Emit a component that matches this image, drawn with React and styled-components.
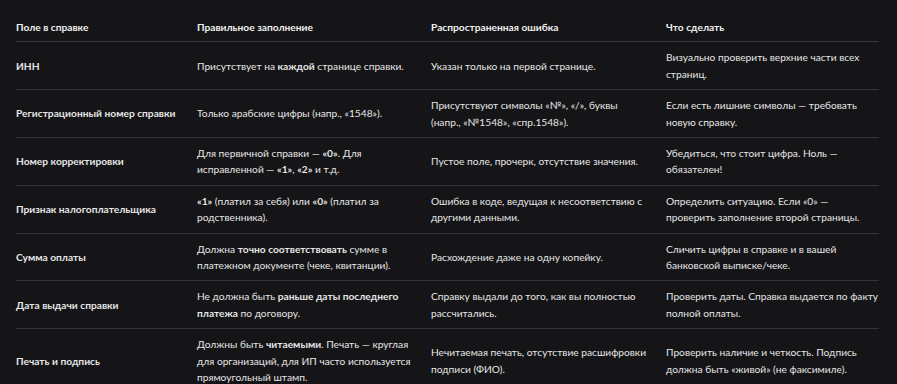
import React from "react";
import styled, { createGlobalStyle } from "styled-components";

const Global = createGlobalStyle`
  html, body { margin: 0; padding: 0; background: #151517; }
  body { font-family: Lato, "Noto Sans", sans-serif; }
`;

const Wrap = styled.div`
  padding: 8px 18px 0 16px;
  background: #151517;
  height: 384px;
  box-sizing: border-box;
  overflow: hidden;
`;

const Table = styled.table`
  width: 100%;
  border-collapse: collapse;
  table-layout: fixed;
  font-size: 10.2px;
  line-height: 16.4px;
  color: #e6e6e6;
`;

const Th = styled.th`
  text-align: left;
  font-weight: 700;
  padding: 11px 6px 6px 0;
  color: #f0f0f0;
  border-bottom: 1px solid #3a3a3c;
  vertical-align: middle;
  &:last-child { padding-right: 0; }
`;

const Td = styled.td`
  padding: 7px 6px 7px 0;
  border-bottom: 1px solid #333336;
  vertical-align: middle;
  font-weight: ${(p) => (p.$head ? 700 : 400)};
  &:last-child { padding-right: 0; }
`;

const B = styled.b`
  font-weight: 700;
`;

const rows = [
  [
    "ИНН",
    <>Присутствует на <B>каждой</B> странице справки.</>,
    "Указан только на первой странице.",
    "Визуально проверить верхние части всех страниц.",
  ],
  [
    "Регистрационный номер справки",
    "Только арабские цифры (напр., «1548»).",
    "Присутствуют символы «№», «/», буквы (напр.,\u00a0«№1548», «спр.1548»).",
    "Если есть лишние символы — требовать новую справку.",
  ],
  [
    "Номер корректировки",
    <>Для первичной справки — <B>«0»</B>. Для исправленной — <B>«1»</B>, <B>«2»</B> и т.д.</>,
    "Пустое поле, прочерк, отсутствие значения.",
    "Убедиться, что стоит цифра. Ноль — обязателен!",
  ],
  [
    "Признак налогоплательщика",
    <><B>«1»</B> (платил за себя) или <B>«0»</B> (платил за родственника).</>,
    "Ошибка в коде, ведущая к несоответствию с другими данными.",
    "Определить ситуацию. Если «0» — проверить заполнение второй страницы.",
  ],
  [
    "Сумма оплаты",
    <>Должна <B>точно соответствовать</B> сумме в платежном документе (чеке, квитанции).</>,
    "Расхождение даже на одну копейку.",
    "Сличить цифры в справке и в вашей банковской выписке/чеке.",
  ],
  [
    "Дата выдачи справки",
    <>Не должна быть <B>раньше даты последнего платежа</B> по договору.</>,
    "Справку выдали до того, как вы полностью рассчитались.",
    "Проверить даты. Справка выдается по факту полной оплаты.",
  ],
  [
    "Печать и подпись",
    <>Должны быть <B>читаемыми</B>. Печать — круглая для организаций, для ИП часто используется прямоугольный штамп.</>,
    "Нечитаемая печать, отсутствие расшифровки подписи (ФИО).",
    "Проверить наличие и четкость. Подпись должна быть «живой» (не факсимиле).",
  ],
];

export default function App() {
  return (
    <>
      <Global />
      <Wrap>
        <Table>
          <colgroup>
            <col style={{ width: "181px" }} />
            <col style={{ width: "234px" }} />
            <col style={{ width: "235px" }} />
            <col />
          </colgroup>
          <thead>
            <tr>
              <Th>Поле в справке</Th>
              <Th>Правильное заполнение</Th>
              <Th>Распространенная ошибка</Th>
              <Th>Что сделать</Th>
            </tr>
          </thead>
          <tbody>
            {rows.map((r, i) => (
              <tr key={i}>
                <Td $head>{r[0]}</Td>
                <Td>{r[1]}</Td>
                <Td>{r[2]}</Td>
                <Td>{r[3]}</Td>
              </tr>
            ))}
          </tbody>
        </Table>
      </Wrap>
    </>
  );
}
